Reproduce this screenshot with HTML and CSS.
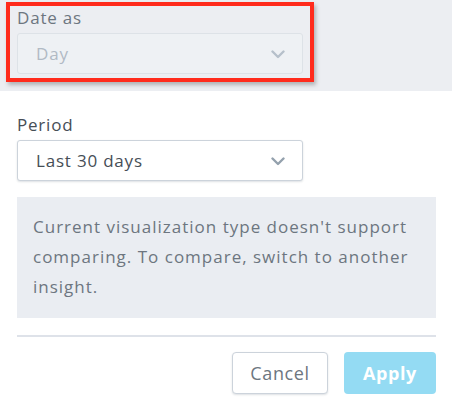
FILE: index.html
```html
<!DOCTYPE html>
<html>
<head>
<meta charset="utf-8">
<link rel="stylesheet" href="styles.css">
</head>
<body>
<div class="top">
  <div class="highlight">
    <div class="label label-muted">Date as</div>
    <div class="select select-disabled">
      <span>Day</span>
      <svg class="chev" width="14" height="9" viewBox="0 0 14 9"><path d="M1.5 1.5 L7 7 L12.5 1.5" fill="none" stroke="currentColor" stroke-width="2.4" stroke-linecap="round" stroke-linejoin="round"/></svg>
    </div>
  </div>
</div>
<div class="content">
  <div class="label label-period">Period</div>
  <div class="select">
    <span>Last 30 days</span>
    <svg class="chev" width="14" height="9" viewBox="0 0 14 9"><path d="M1.5 1.5 L7 7 L12.5 1.5" fill="none" stroke="currentColor" stroke-width="2.4" stroke-linecap="round" stroke-linejoin="round"/></svg>
  </div>
  <div class="info">Current visualization type doesn't support comparing. To compare, switch to another insight.</div>
  <div class="divider"></div>
  <div class="actions">
    <button class="btn btn-cancel">Cancel</button>
    <button class="btn btn-apply">Apply</button>
  </div>
</div>
</body>
</html>
```
FILE: styles.css
```css
* { box-sizing: border-box; }
html, body { margin: 0; padding: 0; background: #fff; }
body {
  font-family: "Open Sans", Lato, sans-serif;
  color: #464e56;
  width: 452px;
  height: 404px;
  overflow: hidden;
  letter-spacing: 0.8px;
}
.top {
  background: #eceef2;
  height: 91px;
  padding: 2px 0 0 6px;
}
.highlight {
  width: 308px;
  height: 80px;
  border: 4px solid #ff2b1c;
  box-shadow: 2px 3px 4px rgba(0,0,0,0.25);
  padding: 1px 7px 0 7px;
}
.label {
  font-size: 17px;
  line-height: 22px;
  height: 26px;
}
.label-muted { color: #6d7680; }
.select {
  width: 286px;
  height: 41px;
  border: 1px solid #ccd3db;
  border-radius: 3px;
  background: #fff;
  box-shadow: 0 1px 2px rgba(31,53,74,0.15);
  display: flex;
  align-items: center;
  justify-content: space-between;
  padding: 0 17px 0 18px;
  font-size: 17px;
  color: #464e56;
}
.select-disabled {
  background: #eef1f4;
  border-color: #dde2e7;
  box-shadow: none;
  color: #b1bac4;
}
.chev { color: #94a1ad; margin-top: 1px; }
.select-disabled .chev { color: #b6c0ca; }
.content {
  padding: 0 16px 0 17px;
}
.label-period {
  margin-top: 22px;
  height: 27px;
  line-height: 24px;
}
.info {
  margin-top: 16px;
  background: #eaedf2;
  height: 121px;
  padding: 15px 12px 0 16px;
  font-size: 17px;
  line-height: 30px;
  letter-spacing: 1px;
  color: #6d7680;
}
.divider {
  margin-top: 17px;
  height: 2px;
  background: #dee2e9;
}
.actions {
  margin-top: 15px;
  display: flex;
  justify-content: flex-end;
  gap: 16px;
}
.btn {
  font-family: "Open Sans", Lato, sans-serif;
  font-size: 18px;
  letter-spacing: 0.6px;
  height: 42px;
  border-radius: 4px;
  padding: 0;
}
.btn-cancel {
  width: 96px;
  background: #fff;
  border: 1px solid #ccd3db;
  color: #6d7680;
  box-shadow: 0 1px 2px rgba(31,53,74,0.15);
}
.btn-apply {
  width: 92px;
  background: #94dbf3;
  border: none;
  color: #fff;
  font-weight: 700;
}
```
